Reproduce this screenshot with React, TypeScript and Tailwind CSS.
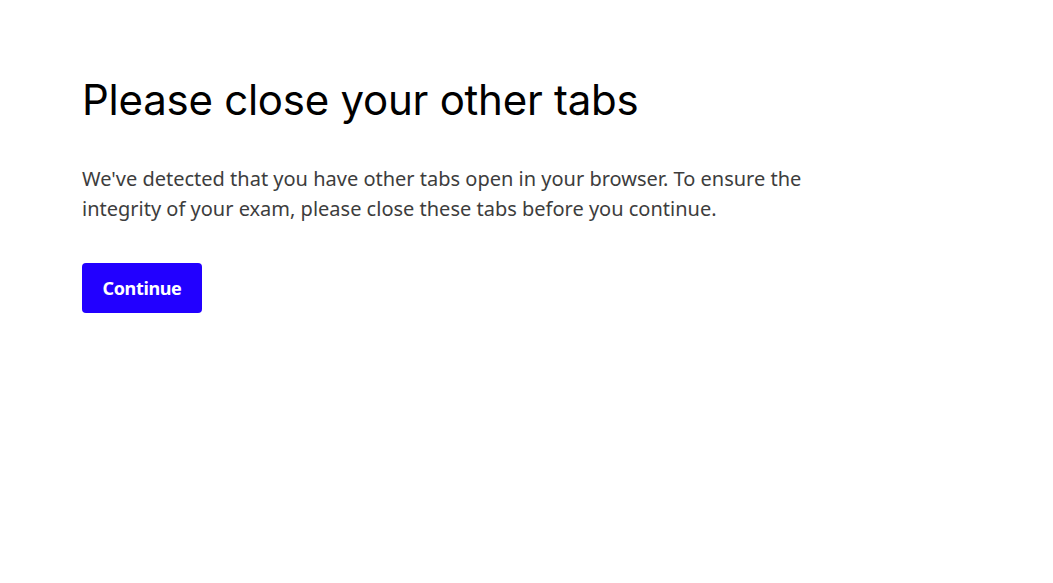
export default function App() {
  return (
    <div className="min-h-screen bg-white px-[82px] pt-[72px]">
      <h1 className="text-[42px] leading-[56px] tracking-[-0.006em] font-normal text-black font-['Inter',sans-serif]">
        Please close your other tabs
      </h1>
      <p className="mt-[36px] max-w-[740px] text-[20px] leading-[30px] text-[#3d3d3d] font-['Noto_Sans',sans-serif]">
        We've detected that you have other tabs open in your browser. To ensure the integrity of your exam, please close
        these tabs before you continue.
      </p>
      <button className="mt-[39px] h-[50px] w-[120px] rounded-[4px] bg-[#2200ff] text-[18px] tracking-[-0.02em] font-bold text-white font-['Noto_Sans',sans-serif]">
        Continue
      </button>
    </div>
  );
}
